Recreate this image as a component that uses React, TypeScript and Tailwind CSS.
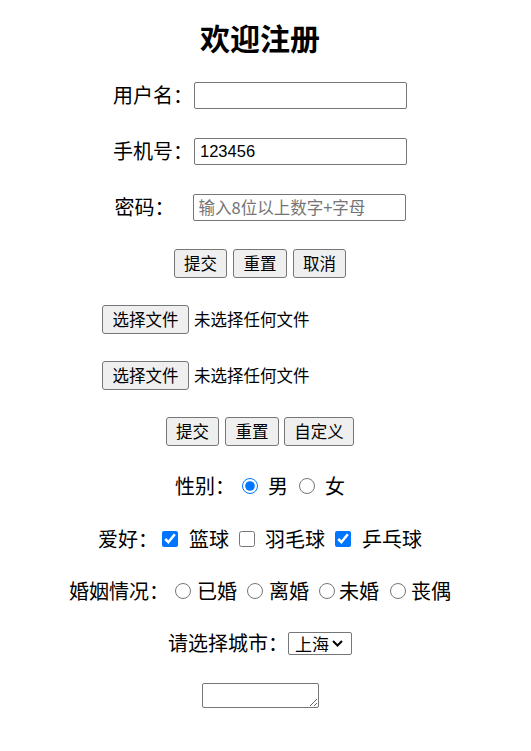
import React from "react";

const cjk = { fontFamily: '"Noto Sans CJK SC", "Liberation Sans", sans-serif' };

function Btn({ label, w }: { label: string; w: string }) {
  return (
    <button
      type="button"
      className={`${w} h-[29px] flex items-center justify-center bg-[#efefef] border border-[#767676] rounded-[3px] text-[16.5px] leading-none text-black`}
    >
      {label}
    </button>
  );
}

function FileRow() {
  return (
    <div className="h-[56px] w-[520px] flex justify-center items-center">
      <div className="w-[316px] flex items-center">
        <Btn label="选择文件" w="w-[87px]" />
        <span className="ml-[5px] text-[16.5px] leading-none">未选择任何文件</span>
      </div>
    </div>
  );
}

export default function App() {
  return (
    <div className="w-[520px] flex flex-col items-center text-black text-[20px] leading-none" style={cjk}>
      <h2 className="h-[67px] pt-[22px] text-[30px] font-bold leading-none">欢迎注册</h2>

      {/* 文本输入 */}
      <div className="h-[56px] w-[520px] flex justify-center items-center">
        <span>用户名：</span>
        <input
          type="text"
          className="ml-[1px] w-[213px] h-[27px] px-[4px] border border-[#767676] rounded-[2px] bg-white text-[16.5px] outline-none"
        />
      </div>
      <div className="h-[56px] w-[520px] flex justify-center items-center">
        <span>手机号：</span>
        <input
          type="text"
          defaultValue="123456"
          className="ml-[1px] w-[213px] h-[27px] px-[5px] border border-[#767676] rounded-[2px] bg-white text-[16.5px] outline-none"
          style={{ fontFamily: '"Liberation Sans", "Noto Sans CJK SC", sans-serif' }}
        />
      </div>
      <div className="h-[56px] w-[520px] flex justify-center items-center">
        <span>密码：</span>
        <input
          type="password"
          placeholder="输入8位以上数字+字母"
          className="ml-[18px] w-[213px] h-[27px] px-[5px] border border-[#767676] rounded-[2px] bg-white text-[16.5px] outline-none placeholder:text-[#757575]"
        />
      </div>

      <div className="h-[56px] w-[520px] flex justify-center items-center gap-[6px]">
        <Btn label="提交" w="w-[53px]" />
        <Btn label="重置" w="w-[54px]" />
        <Btn label="取消" w="w-[53px]" />
      </div>

      <FileRow />
      <FileRow />

      <div className="h-[56px] w-[520px] flex justify-center items-center">
        <Btn label="提交" w="w-[53px]" />
        <div className="ml-[6px]"><Btn label="重置" w="w-[54px]" /></div>
        <div className="ml-[5px]"><Btn label="自定义" w="w-[70px]" /></div>
      </div>

      {/* 单选 / 多选 */}
      <div className="h-[54px] w-[520px] flex justify-center items-center">
        <span>性别：</span>
        <input type="radio" name="sex" defaultChecked className="ml-[7px] w-[16px] h-[16px] m-0 accent-[#0075ff]" />
        <span className="ml-[10px]">男</span>
        <input type="radio" name="sex" className="ml-[11px] w-[16px] h-[16px] m-0 accent-[#0075ff]" />
        <span className="ml-[10px]">女</span>
      </div>
      <div className="h-[52px] w-[520px] flex justify-center items-center">
        <span>爱好：</span>
        <input type="checkbox" defaultChecked className="ml-[4px] w-[16px] h-[16px] m-0 accent-[#0075ff]" />
        <span className="ml-[11px]">篮球</span>
        <input type="checkbox" className="ml-[10px] w-[16px] h-[16px] m-0 accent-[#0075ff]" />
        <span className="ml-[10px]">羽毛球</span>
        <input type="checkbox" defaultChecked className="ml-[10px] w-[16px] h-[16px] m-0 accent-[#0075ff]" />
        <span className="ml-[11px]">乒乓球</span>
      </div>
      <div className="h-[52px] w-[520px] flex justify-center items-center">
        <span>婚姻情况：</span>
        <input type="radio" name="marry" className="ml-[6px] w-[16px] h-[16px] m-0 accent-[#0075ff]" />
        <span className="ml-[6px]">已婚</span>
        <input type="radio" name="marry" className="ml-[10px] w-[16px] h-[16px] m-0 accent-[#0075ff]" />
        <span className="ml-[6px]">离婚</span>
        <input type="radio" name="marry" className="ml-[10px] w-[16px] h-[16px] m-0 accent-[#0075ff]" />
        <span className="ml-[4px]">未婚</span>
        <input type="radio" name="marry" className="ml-[11px] w-[16px] h-[16px] m-0 accent-[#0075ff]" />
        <span className="ml-[5px]">丧偶</span>
      </div>

      <div className="h-[52px] w-[520px] flex justify-center items-center">
        <span>请选择城市：</span>
        <div className="relative">
          <select
            defaultValue="上海"
            className="appearance-none w-[64px] h-[23px] pl-[6px] border border-[#767676] rounded-[2px] bg-white text-[17px] leading-none"
          >
            <option>北京</option>
            <option>上海</option>
            <option>广州</option>
          </select>
          <svg
            className="pointer-events-none absolute right-[9px] top-[8px] w-[11px] h-[7px]"
            viewBox="0 0 11 7"
            fill="none"
            stroke="#000"
            strokeWidth="2"
          >
            <path d="M1 1l4.5 4.5L10 1" />
          </svg>
        </div>
      </div>

      <div className="h-[52px] w-[520px] flex justify-center items-center">
        <textarea className="w-[117px] h-[25px] border border-[#767676] rounded-[2px] bg-white" />
      </div>
    </div>
  );
}
